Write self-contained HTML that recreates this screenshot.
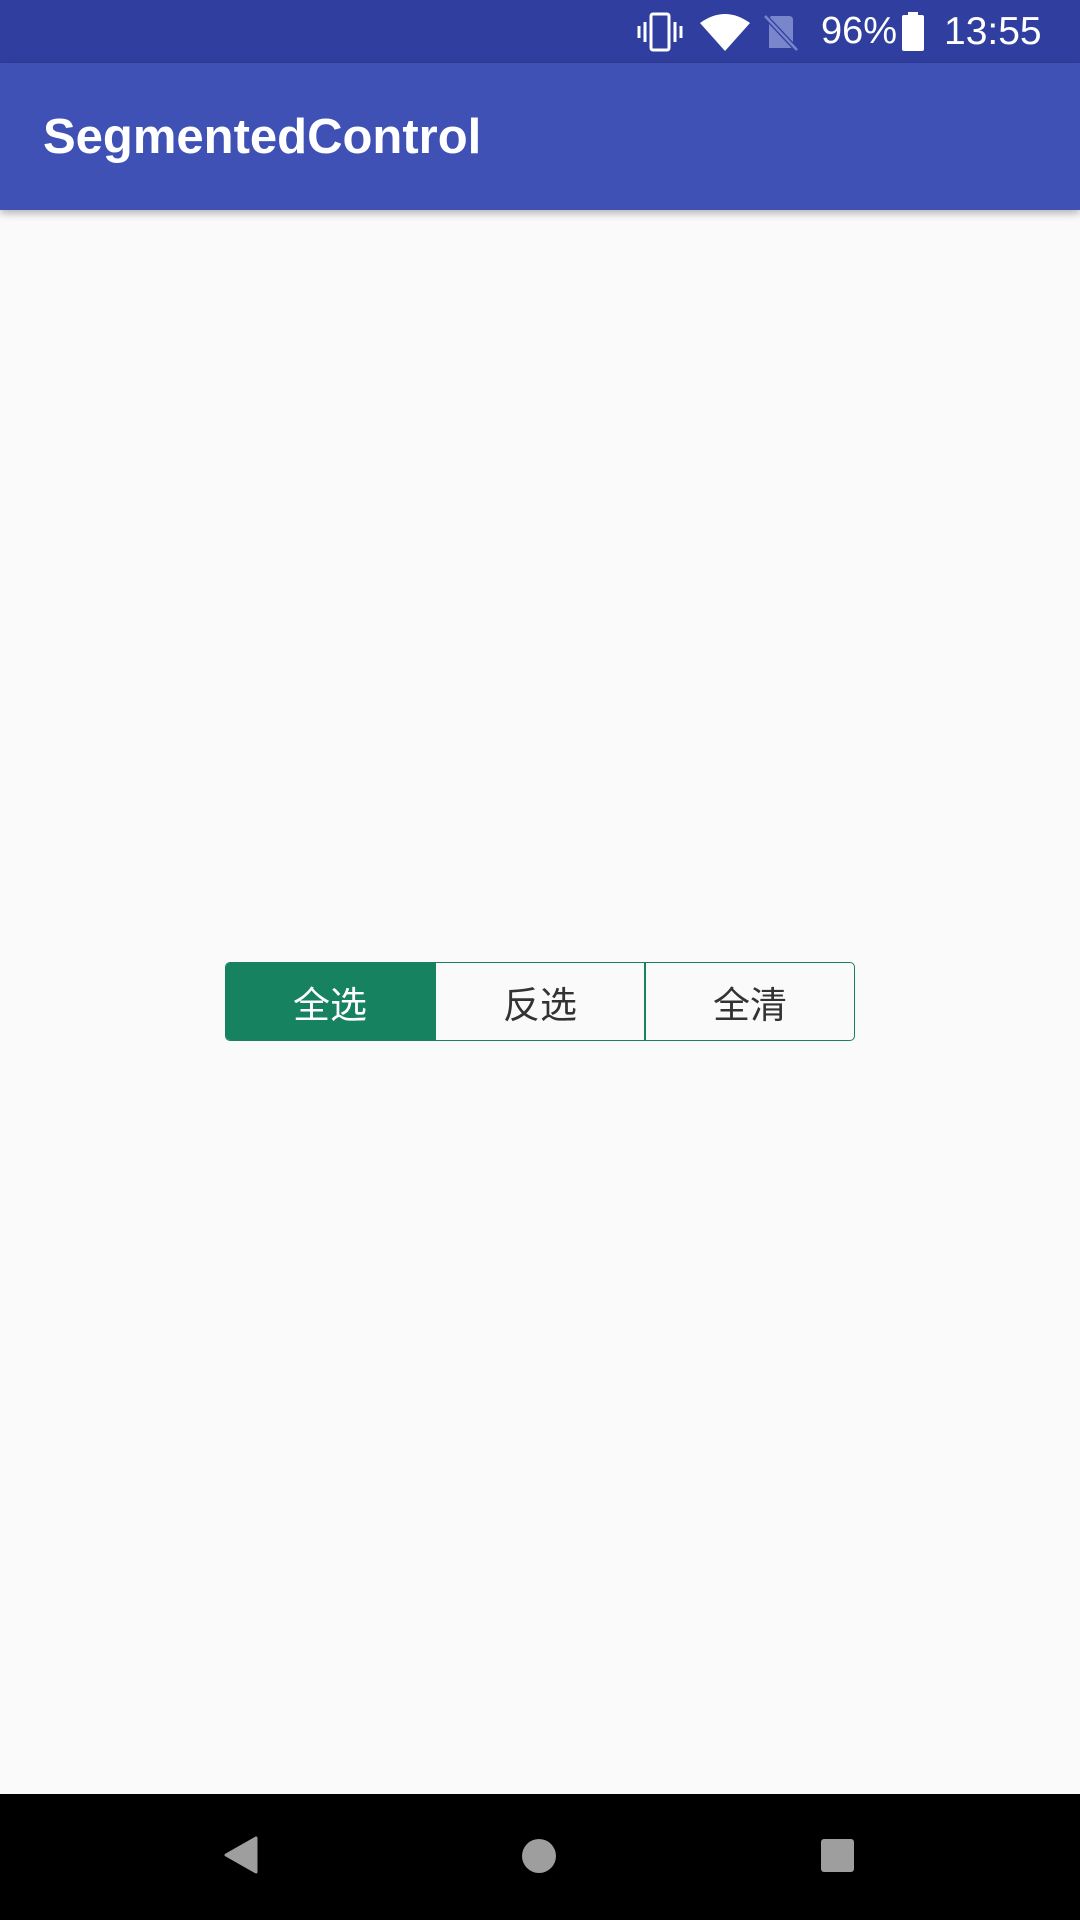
<!DOCTYPE html>
<html><head><meta charset="utf-8"><style>
html,body{margin:0;padding:0;width:1080px;height:1920px;overflow:hidden;background:#FAFAFA;font-family:"Liberation Sans","Noto Sans CJK SC",sans-serif;position:relative}
#sb{position:absolute;left:0;top:0;width:1080px;height:63px;background:#303F9F;color:#fff}
#tb{position:absolute;left:0;top:63px;width:1080px;height:147px;background:#3F51B5;box-shadow:0 3px 8px rgba(0,0,0,.3)}
#title{position:absolute;left:43px;top:113px;font-size:49px;font-weight:bold;color:#fff;line-height:1}
#nav{position:absolute;left:0;top:1794px;width:1080px;height:126px;background:#000}
#seg{position:absolute;left:225px;top:962px;width:630px;height:79px;border:1px solid #17825F;border-radius:5px;box-sizing:border-box;display:flex;overflow:hidden}
#seg div{flex:1;display:flex;align-items:center;justify-content:center;font-size:37px;color:#333}
#seg div+div{border-left:2px solid #17825F}
#seg .on{background:#17825F;color:#fff}
.t{position:absolute;top:12px;font-size:38px;line-height:1}
</style></head><body>
<div id="sb">
<svg style="position:absolute;left:637px;top:11px" width="46" height="42" viewBox="0 0 46 42" fill="none" stroke="#fff" stroke-width="3"><rect x="14" y="3" width="18" height="36" rx="2"/><line x1="8" y1="11" x2="8" y2="31"/><line x1="38" y1="11" x2="38" y2="31"/><line x1="2" y1="15" x2="2" y2="27"/><line x1="44" y1="15" x2="44" y2="27"/></svg>
<svg style="position:absolute;left:700px;top:13px" width="50" height="38" viewBox="0 0 50 38"><path d="M0 10 Q25 -8 50 10 L25 38 Z" fill="#fff"/></svg>
<svg style="position:absolute;left:763px;top:14px" width="36" height="38" viewBox="0 0 36 38"><path d="M8 2 H26 Q30 2 30 6 V34 H6 V4 Z" fill="#7986CB"/><line x1="2" y1="2" x2="34" y2="36" stroke="#303F9F" stroke-width="5"/><line x1="2" y1="2" x2="34" y2="36" stroke="#7986CB" stroke-width="2.5"/></svg>
<div class="t" style="left:821px">96%</div>
<svg style="position:absolute;left:902px;top:12px" width="22" height="39" viewBox="0 0 22 39"><rect x="6" y="0" width="10" height="4" fill="#fff"/><rect x="0" y="3" width="22" height="36" rx="2" fill="#fff"/></svg>
<div class="t" style="left:944px;font-size:39px">13:55</div>
</div>
<div id="tb"></div>
<div id="title">SegmentedControl</div>
<div id="seg"><div class="on">全选</div><div>反选</div><div>全清</div></div>
<div id="nav">
<svg style="position:absolute;left:224px;top:42px" width="34" height="38" viewBox="0 0 34 38"><path d="M32 2 V36 L2 19 Z" fill="#9e9e9e" stroke="#9e9e9e" stroke-width="3" stroke-linejoin="round"/></svg>
<div style="position:absolute;left:522px;top:45px;width:34px;height:34px;border-radius:50%;background:#9e9e9e"></div>
<div style="position:absolute;left:821px;top:45px;width:33px;height:33px;border-radius:3px;background:#9e9e9e"></div>
</div>
</body></html>
